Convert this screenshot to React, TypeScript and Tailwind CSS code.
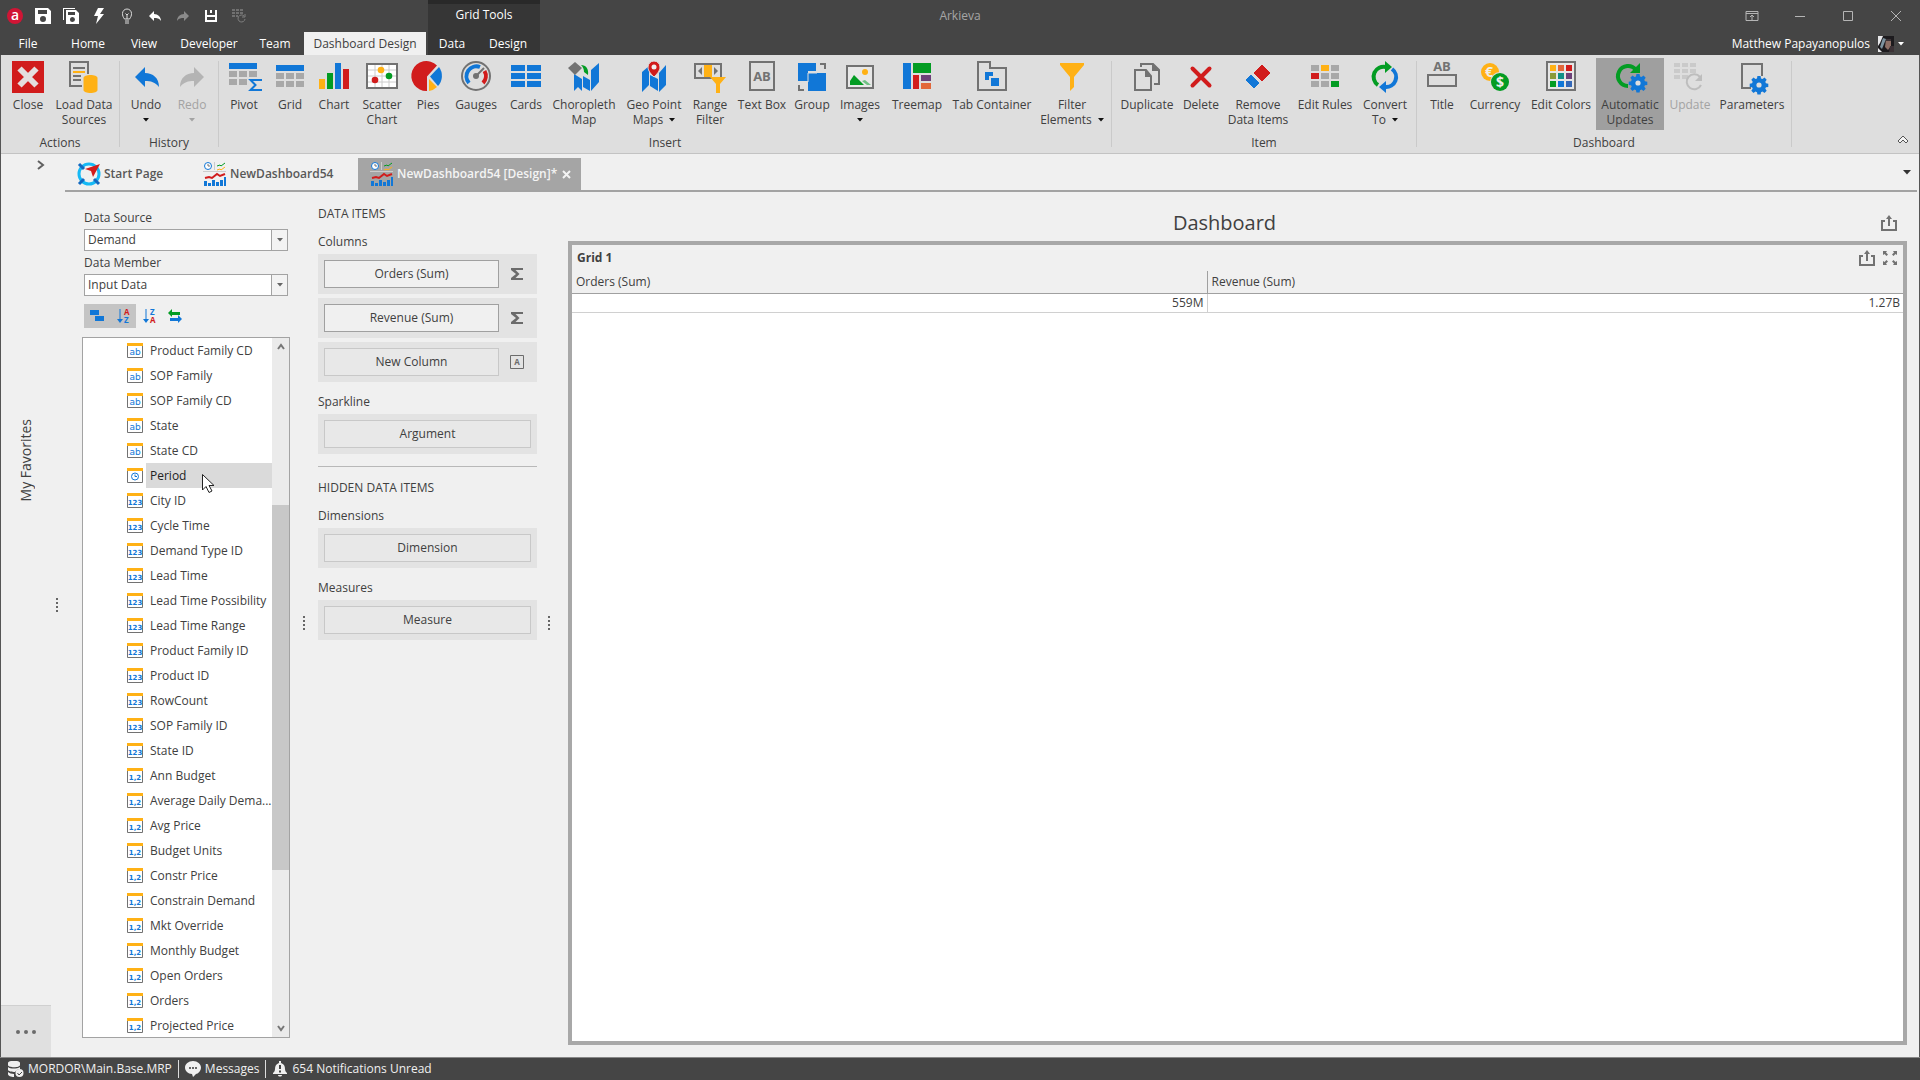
import type { ReactNode } from "react";

const BLUE = "#1177d7";
const RED = "#d11c1c";
const GREEN = "#039c23";
const YELLOW = "#ffb115";
const GRAY = "#727272";
const LIGHT = "#a8a8a8";

function Icon({ children }: { children: ReactNode }) {
  return (
    <svg width="32" height="32" viewBox="0 0 32 32" className="shrink-0 overflow-visible" aria-hidden>
      {children}
    </svg>
  );
}

const GEAR =
  "M-1.6-8h3.2l.4 2.4 1.5.6 2-1.4 2.2 2.2-1.4 2 .6 1.5 2.4.4v3.2l-2.4.4-.6 1.5 1.4 2-2.2 2.2-2-1.4-1.5.6-.4 2.4h-3.2l-.4-2.4-1.5-.6-2 1.4-2.2-2.2 1.4-2-.6-1.5-2.4-.4v-3.2l2.4-.4.6-1.5-1.4-2 2.2-2.2 2 1.4 1.5-.6z";

function Cells({ xs, ys, w, h, fill }: { xs: number[]; ys: number[]; w: number; h: number; fill: string }) {
  return (
    <>
      {ys.map((y) => xs.map((x) => <rect key={`${x}-${y}`} x={x} y={y} width={w} height={h} fill={fill} />))}
    </>
  );
}

function Gear({ x, y }: { x: number; y: number }) {
  return (
    <g transform={`translate(${x} ${y})`}>
      <path d={GEAR} fill={BLUE} transform="translate(0 -1)" />
      <circle r="2.6" fill="#dedede" />
    </g>
  );
}

const icons: Record<string, ReactNode> = {
  close: (
    <>
      <path d="M0 0h32v32H0z" fill={RED} />
      <path d="M7.500 7.500l17 17M24.500 7.500l-17 17" stroke="#e4dede" strokeWidth="6" />
    </>
  ),
  load: (
    <>
      <path d="M20 13V1H2v24h12" fill="none" stroke={GRAY} strokeWidth="2" />
      <path d="M5 7h12M5 15h8M5 19h8" stroke={GRAY} strokeWidth="2" />
      <path d="M5 11h12" stroke={YELLOW} strokeWidth="2" />
      <path d="M15.500 17c0-4 14-4 14 0v12c0 4-14 4-14 0z" fill={YELLOW} />
    </>
  ),
  undo: <path d="M5 16L15 6v6c8 0 14 5 14 14-4-5-8-6-14-6v6z" fill={BLUE} />,
  redo: <path d="M28 16L18 6v6C10 12 4 17 4 26c4-5 8-6 14-6v6z" fill="#b4b4b4" />,
  pivot: (
    <>
      <path d="M1 2h28v6H1z" fill={BLUE} />
      <Cells xs={[1, 11, 21]} ys={[10]} w={8} h={6} fill={LIGHT} />
      <Cells xs={[1, 11]} ys={[18]} w={8} h={6} fill={LIGHT} />
      <path d="M33 20v-1H22.500l5 5-5 5H33v-1" fill="none" stroke={BLUE} strokeWidth="2" />
    </>
  ),
  grid: (
    <>
      <path d="M2 4h28v6H2z" fill={BLUE} />
      <Cells xs={[2, 12, 22]} ys={[12, 20]} w={8} h={6} fill={LIGHT} />
    </>
  ),
  chart: (
    <>
      <path d="M1 18h6v10H1z" fill={YELLOW} />
      <path d="M9 12h6v16H9z" fill={GREEN} />
      <path d="M17 2h6v26h-6z" fill={BLUE} />
      <path d="M25 8h6v20h-6z" fill={RED} />
    </>
  ),
  scatter: (
    <>
      <path d="M1 3h30v24H1z" fill="#fff" stroke={GRAY} strokeWidth="2" />
      <path d="M2 9h28M2 15h28M2 21h28M9 4v22M16 4v22M23 4v22" stroke="#ccc" strokeWidth="1" />
      <circle cx="15" cy="9" r="3.300" fill={YELLOW} />
      <circle cx="23" cy="15" r="3.300" fill={GREEN} />
      <circle cx="9" cy="19" r="3.300" fill={RED} />
    </>
  ),
  pies: (
    <>
      <path d="M15 15.500L25 4.500A15 15 0 1 0 15 30z" fill={RED} />
      <path d="M18 15.500L27 6a15 15 0 0 1-1 19z" fill={BLUE} />
      <path d="M17 18l8 8a15 15 0 0 1-8 4z" fill={YELLOW} />
    </>
  ),
  gauges: (
    <>
      <circle cx="16" cy="15" r="14" fill="none" stroke={GRAY} strokeWidth="2" />
      <path d="M9 22A10 10 0 0 1 20 6" fill="none" stroke={BLUE} strokeWidth="4" />
      <path d="M24.500 10a10 10 0 0 1-1.500 12" fill="none" stroke={RED} strokeWidth="4" />
      <path d="M16 15l8-8" stroke={GRAY} strokeWidth="2" />
      <circle cx="16" cy="15" r="3" fill={GRAY} />
    </>
  ),
  cards: <Cells xs={[1, 17]} ys={[4, 12, 20]} w={14} h={6} fill={BLUE} />,
  choropleth: (
    <>
      <path d="M6 13l8 5v12l-4-4-4 4zM15 15l7 4v11l-7-4zM23 9l8-7v19l-8 9z" fill={BLUE} />
      <path d="M7 1l7 6-7 7-7-7z" fill={GRAY} />
      <path d="M13 4c5 0 8 4 7 10l-4-3c0-3-1-5-3-7z" fill={GREEN} />
    </>
  ),
  geo: (
    <>
      <path d="M4 11l7-6v19l-7 7zM12 14l8 4v12l-8-5zM21 12l7-8v20l-7 7z" fill={BLUE} />
      <path d="M16 0a6 6 0 0 1 6 6c0 4-3 7-6 10-3-3-6-6-6-10a6 6 0 0 1 6-6z" fill={RED} stroke="#dedede" />
      <circle cx="16" cy="6" r="2.500" fill="#f0f0f0" />
    </>
  ),
  range: (
    <>
      <path d="M1 3h26v14H1z" fill="none" stroke={GRAY} strokeWidth="2" />
      <path d="M8 6v8l-4-4zM20 6v8l4-4z" fill={GRAY} />
      <path d="M10 4h8v12h-8z" fill={YELLOW} />
      <path d="M16 16h16l-6 7v9h-4v-9z" fill={YELLOW} />
    </>
  ),
  textbox: (
    <>
      <path d="M4 1h24v28H4z" fill="none" stroke={GRAY} strokeWidth="2" />
      <text x="16" y="20" textAnchor="middle" fontSize="13" fontWeight="700" fill={GRAY}>
        AB
      </text>
    </>
  ),
  group: (
    <>
      <path d="M2 2h18v8h-8v10H2z" fill={BLUE} />
      <path d="M12 12h18v18H12z" fill={BLUE} />
      <path d="M12 21v-9h9" fill="none" stroke="#dedede" />
      <path d="M24 3h5v5M3 24v5h5" fill="none" stroke={GRAY} strokeWidth="2" />
    </>
  ),
  images: (
    <>
      <path d="M3 5h26v22H3z" fill="#e8e8e8" stroke={GRAY} strokeWidth="2" />
      <path d="M6 24v-4l4-6 10 10z" fill={GREEN} />
      <path d="M18 20l3-1 6 5h-4z" fill="#6fc183" />
      <circle cx="21" cy="11" r="3" fill={YELLOW} />
    </>
  ),
  treemap: (
    <>
      <path d="M2 2h8v26H2z" fill={BLUE} />
      <path d="M12 2h18v10H12z" fill={GREEN} />
      <path d="M12 14h6v14h-6z" fill={RED} />
      <path d="M20 14h10v6H20z" fill="#6d4178" />
      <path d="M20 22h10v6H20z" fill="#e2673a" />
    </>
  ),
  tabs: (
    <>
      <path d="M2 1h12v6h16v22H2z" fill="none" stroke={GRAY} strokeWidth="2" />
      <path d="M9 11h8v4h-4v4H9z" fill={BLUE} />
      <path d="M15 17h8v8h-8z" fill={BLUE} />
    </>
  ),
  filter: <path d="M4 2h24v2L18 16v10l-4 4V16L4 4z" fill={YELLOW} />,
  duplicate: (
    <>
      <path d="M10 6V3h12l6 6v14h-5" fill="none" stroke={GRAY} strokeWidth="2" />
      <path d="M4 9h11l5 6v14H4z" fill="none" stroke={GRAY} strokeWidth="2" />
      <path d="M14 8v8h7zM21 2v8h7z" fill={GRAY} />
    </>
  ),
  delete: <path d="M7.500 7.500l17 17M24.500 7.500l-17 17" stroke={RED} strokeWidth="4" strokeLinecap="round" />,
  remove: (
    <>
      <path d="M20 4l8 8-8 8-8-8z" fill={RED} stroke={RED} strokeLinejoin="round" />
      <path d="M9 14l8 8-5 5-8-8z" fill={BLUE} stroke={BLUE} strokeLinejoin="round" />
    </>
  ),
  rules: (
    <>
      <Cells xs={[2, 12, 22]} ys={[4, 12, 20]} w={8} h={6} fill={LIGHT} />
      <path d="M12 4h8v6h-8z" fill={YELLOW} />
      <path d="M2 12h8v6H2z" fill={RED} />
      <path d="M22 20h8v6h-8z" fill={GREEN} />
    </>
  ),
  convert: (
    <>
      <path d="M9 24A10 10 0 0 1 17 6" fill="none" stroke={GREEN} strokeWidth="4" />
      <path d="M16 0l7 6-7 6z" fill={GREEN} />
      <path d="M23 8a10 10 0 0 1-7 18" fill="none" stroke={BLUE} strokeWidth="4" />
      <path d="M17 20v12l-7-6z" fill={BLUE} />
    </>
  ),
  title: (
    <>
      <text x="16" y="10" textAnchor="middle" fontSize="13" fontWeight="700" fill={GRAY}>
        AB
      </text>
      <path d="M2 14h28v11H2z" fill="none" stroke={GRAY} strokeWidth="2" />
    </>
  ),
  currency: (
    <>
      <circle cx="11" cy="11" r="9" fill={YELLOW} />
      <text x="10" y="16" textAnchor="middle" fontSize="14" fontWeight="700" fill="#eee">
        €
      </text>
      <circle cx="21" cy="21" r="10" fill="#dedede" />
      <circle cx="21" cy="21" r="9" fill={GREEN} />
      <text x="21" y="26" textAnchor="middle" fontSize="14" fontWeight="700" fill="#eee">
        $
      </text>
    </>
  ),
  colors: (
    <>
      <path d="M2 1h28v28H2z" fill="#e6e6e6" stroke={GRAY} strokeWidth="2" />
      {[YELLOW, "#e2673a", RED, "#8a9a3a", "#0f8f86", "#6d4178", GREEN, BLUE, "#3468b8"].map((c, i) => (
        <rect key={c} x={5 + (i % 3) * 8} y={4 + Math.floor(i / 3) * 8} width="6" height="6" fill={c} />
      ))}
    </>
  ),
  auto: (
    <>
      <path d="M22 9A10 10 0 1 0 14 25" fill="none" stroke={GREEN} strokeWidth="4" />
      <path d="M26 2v10H16z" fill={GREEN} />
      <Gear x={24} y={22} />
    </>
  ),
  update: (
    <>
      <Cells xs={[0, 8, 16]} ys={[2, 8]} w={6} h={4} fill="#cacaca" />
      <Cells xs={[0, 8]} ys={[14]} w={6} h={4} fill="#cacaca" />
      <path d="M26 16a7.500 7.500 0 1 0 1 8" fill="none" stroke="#bdbdbd" strokeWidth="2" />
      <path d="M28 13v7h-7z" fill="#bdbdbd" />
    </>
  ),
  params: (
    <>
      <path d="M26 15V3H6v24h9" fill="none" stroke={GRAY} strokeWidth="2" />
      <Gear x={23} y={24} />
    </>
  ),
};

type RibbonItem = {
  icon: string;
  lines: string[];
  width: string;
  menu?: boolean;
  disabled?: boolean;
  active?: boolean;
};

const ribbonGroups: { name: string; items: RibbonItem[] }[] = [
  {
    name: "Actions",
    items: [
      { icon: "close", lines: ["Close"], width: "w-12" },
      { icon: "load", lines: ["Load Data", "Sources"], width: "w-16" },
    ],
  },
  {
    name: "History",
    items: [
      { icon: "undo", lines: ["Undo"], width: "w-[46px]", menu: true },
      { icon: "redo", lines: ["Redo"], width: "w-[46px]", menu: true, disabled: true },
    ],
  },
  {
    name: "Insert",
    items: [
      { icon: "pivot", lines: ["Pivot"], width: "w-11" },
      { icon: "grid", lines: ["Grid"], width: "w-12" },
      { icon: "chart", lines: ["Chart"], width: "w-10" },
      { icon: "scatter", lines: ["Scatter", "Chart"], width: "w-14" },
      { icon: "pies", lines: ["Pies"], width: "w-9" },
      { icon: "gauges", lines: ["Gauges"], width: "w-15" },
      { icon: "cards", lines: ["Cards"], width: "w-10" },
      { icon: "choropleth", lines: ["Choropleth", "Map"], width: "w-19" },
      { icon: "geo", lines: ["Geo Point", "Maps"], width: "w-16", menu: true },
      { icon: "range", lines: ["Range", "Filter"], width: "w-12" },
      { icon: "textbox", lines: ["Text Box"], width: "w-14" },
      { icon: "group", lines: ["Group"], width: "w-11" },
      { icon: "images", lines: ["Images"], width: "w-13", menu: true },
      { icon: "treemap", lines: ["Treemap"], width: "w-[62px]" },
      { icon: "tabs", lines: ["Tab Container"], width: "w-22" },
      { icon: "filter", lines: ["Filter", "Elements"], width: "w-18", menu: true },
    ],
  },
  {
    name: "Item",
    items: [
      { icon: "duplicate", lines: ["Duplicate"], width: "w-16" },
      { icon: "delete", lines: ["Delete"], width: "w-11" },
      { icon: "remove", lines: ["Remove", "Data Items"], width: "w-[70px]" },
      { icon: "rules", lines: ["Edit Rules"], width: "w-16" },
      { icon: "convert", lines: ["Convert", "To"], width: "w-14", menu: true },
    ],
  },
  {
    name: "Dashboard",
    items: [
      { icon: "title", lines: ["Title"], width: "w-11" },
      { icon: "currency", lines: ["Currency"], width: "w-[62px]" },
      { icon: "colors", lines: ["Edit Colors"], width: "w-[70px]" },
      { icon: "auto", lines: ["Automatic", "Updates"], width: "w-17", active: true },
      { icon: "update", lines: ["Update"], width: "w-13", disabled: true },
      { icon: "params", lines: ["Parameters"], width: "w-18" },
    ],
  },
];

function Caret({ className = "" }: { className?: string }) {
  return (
    <svg width="6" height="4" viewBox="0 0 6 4" className={`inline-block shrink-0 ${className}`} aria-hidden>
      <path d="M0 0h6L3 3.500z" fill="currentColor" />
    </svg>
  );
}

function RibbonButton({ item }: { item: RibbonItem }) {
  const [first, second] = item.lines;
  return (
    <button
      type="button"
      disabled={item.disabled}
      className={`flex h-18 flex-col items-center pt-[3px] leading-[15px] whitespace-nowrap ${item.width} ${
        item.active ? "bg-[#9f9f9f]" : ""
      } ${item.disabled ? "text-[#a3a3a3]" : "text-[#404040]"}`}
    >
      <Icon>{icons[item.icon]}</Icon>
      <span className="mt-1">{first}</span>
      <span className="flex h-[15px] items-center gap-1.5">
        {second}
        {item.menu && <Caret className={item.disabled ? "" : "text-[#111]"} />}
      </span>
    </button>
  );
}

function Ribbon() {
  return (
    <div className="flex h-[99px] border-b border-[#c3c3c3] bg-[#dedede]">
      {ribbonGroups.map((group) => (
        <section key={group.name} className="flex items-start">
          <div className="px-[3px] pt-[3px] text-center">
            <div className="flex">
              {group.items.map((item) => (
                <RibbonButton key={item.icon} item={item} />
              ))}
            </div>
            <h2 className="mt-1 leading-[18px] text-[#404040]">{group.name}</h2>
          </div>
          <div className="mt-1.5 h-[86px] w-px bg-[#cacaca]" />
        </section>
      ))}
      <button type="button" aria-label="Collapse the ribbon" className="mt-auto mr-2.5 mb-1.5 ml-auto">
        <svg width="12" height="12" viewBox="0 0 12 12" fill="none" stroke="#555">
          <path d="M1 6l5-5 5 5-2 2-3-3-3 3z" fill="#f5f5f5" />
        </svg>
      </button>
    </div>
  );
}

const quickIcons: [string, ReactNode][] = [
  ["Save", <path key="p" fillRule="evenodd" fill="#fff" d="M0 0h13l3 3v13H0zM3 2v4h9V2zM8 8a3 3 0 1 0 0 6 3 3 0 0 0 0-6z" />],
  [
    "Save All",
    <g key="p" fill="#fff">
      <path d="M0 0h12v1H1v11H0z" />
      <path fillRule="evenodd" d="M3 2h10l3 3v11H3zM5 4v3h7V4zM9.500 9a2.500 2.500 0 1 0 0 5 2.500 2.500 0 0 0 0-5z" />
    </g>,
  ],
  ["Run", <path key="p" fill="#fff" d="M7 0h6l-4 6h4L5 16l2-8H3z" />],
  [
    "Hint",
    <g key="p" fill="none" stroke="#ddd">
      <path d="M5.500 11C4 9 3.500 7.500 3.500 5.500a4.500 4.500 0 0 1 9 0c0 2-.5 3.500-2 5.500zM6 13h4M6 15h4M8 11V6M6.500 5.500L8 7l1.500-1.500" />
    </g>,
  ],
  ["Undo", <path key="p" fill="#fff" d="M2 8l5-5v3c4 0 7 3 7 7-2-3-4-3-7-3v3z" />],
  ["Redo", <path key="p" fill="#8b8b8b" d="M14 8L9 3v3c-4 0-7 3-7 7 2-3 4-3 7-3v3z" />],
  ["Save Dashboard", <path key="p" fillRule="evenodd" fill="#fff" d="M2 2h12v12H2zM4 2v5h8V2H9v3H7V2zM4 9v3h8V9z" />],
  [
    "Update",
    <g key="p" fill="#707070">
      <path d="M1 1h3v2H1zM5 1h3v2H5zM9 1h3v2H9zM1 4h3v2H1zM5 4h3v2H5zM9 4h3v2H9zM1 7h3v2H1zM5 7h2v2H5z" />
      <path d="M13 8a3.500 3.500 0 1 0 1 3M14 6v3h-3" fill="none" stroke="#808080" />
    </g>,
  ],
];

const tabs = [
  { name: "File", width: "w-15 pr-1" },
  { name: "Home", width: "w-14" },
  { name: "View", width: "w-14" },
  { name: "Developer", width: "w-[74px]" },
  { name: "Team", width: "w-[58px]" },
];

function TitleBar() {
  return (
    <header className="grid h-[55px] grid-cols-[1fr_auto_1fr] bg-[#454545] text-white">
      <div className="flex">
        <div className="mr-0.5">
          <div className="flex h-8 items-center gap-3 pl-[7px]">
            <span className="flex size-4 items-center justify-center rounded-full bg-[#d01535] pb-0.5 text-sm leading-none font-semibold">
              a
            </span>
            {quickIcons.map(([name, icon]) => (
              <button key={name} type="button" aria-label={name}>
                <svg width="16" height="16" viewBox="0 0 16 16">
                  {icon}
                </svg>
              </button>
            ))}
          </div>
          <nav className="flex h-[23px]">
            {tabs.map((tab) => (
              <button key={tab.name} type="button" className={tab.width}>
                {tab.name}
              </button>
            ))}
            <button type="button" className="w-[122px] bg-[#f0f0f0] text-[#404040]">
              Dashboard Design
            </button>
          </nav>
        </div>
        <div className="w-28 border-t-4 border-[#292929] bg-[#363636]">
          <div className="flex h-7 justify-center pt-0.5 leading-[18px]">Grid Tools</div>
          <nav className="flex h-[23px]">
            <button type="button" className="w-12">
              Data
            </button>
            <button type="button" className="w-16">
              Design
            </button>
          </nav>
        </div>
      </div>
      <h1 className="leading-8 text-[#a5a5a5]">Arkieva</h1>
      <div className="flex flex-col items-end">
        <div className="flex h-8 text-[#b5b5b5]">
          {[
            ["Ribbon options", "M2 3.500h12v9H2zM2 5.500h12M8 12V7M6 9l2-2 2 2"],
            ["Minimize", "M3 8.500h10"],
            ["Maximize", "M3.500 3.500h9v9h-9z"],
            ["Close window", "M3 3l10 10M13 3L3 13"],
          ].map(([name, d]) => (
            <button key={name} type="button" aria-label={name} className="flex w-12 items-center justify-center">
              <svg width="16" height="16" viewBox="0 0 16 16" fill="none" stroke="currentColor">
                <path d={d} />
              </svg>
            </button>
          ))}
        </div>
        <button type="button" className="flex h-[23px] items-center pr-4">
          Matthew Papayanopulos
          <svg width="16" height="16" viewBox="0 0 16 16" className="mr-1 ml-2">
            <path d="M0 0h16v16H0z" fill="#1d1b1e" />
            <path d="M0 0h5L2 7l-2 3zM0 12l4 4H0z" fill="#e8e8ea" />
            <path d="M5 2L2 11l2 2 4-10z" fill="#7d93a0" />
            <path d="M8 3h5v7l-3 4-3-3z" fill="#8d6f66" />
            <path d="M8 3h5v2H8zM12 10h4v6h-5z" fill="#3c3236" />
          </svg>
          <Caret />
        </button>
      </div>
    </header>
  );
}

function CompassIcon() {
  return (
    <svg width="24" height="24" viewBox="0 0 24 24" aria-hidden>
      <circle cx="12" cy="12" r="10" fill="none" stroke="#16b9f5" strokeWidth="3" />
      <path d="M2 2l5 5M2 22l5-5M22 22l-5-5" stroke="#1368c0" strokeWidth="3" />
      <path d="M23 2l-7 13-2-6-6-2z" fill={RED} />
    </svg>
  );
}

function DashboardIcon() {
  return (
    <svg width="24" height="24" viewBox="0 0 24 24" aria-hidden>
      <circle cx="5" cy="4" r="3.500" fill="#fff" stroke={BLUE} />
      <path d="M5 2v2h2" fill="none" stroke={GRAY} />
      <path d="M11.500 0v8M0 9.500h23" stroke="#ccc" />
      <path d="M14 4l3-1 1 1 4-3" fill="none" stroke={GREEN} />
      <path d="M14 8l3-1 1 1 4-3" fill="none" stroke={YELLOW} />
      <path d="M2 16l4-1 3 1 5-4 3 2 5-2" fill="none" stroke={RED} strokeWidth="2" />
      <path d="M1 19h3v5H1zM5 21h3v3H5zM9 18h3v6H9zM13 20h3v4h-3zM17 18h3v6h-3zM21 15h2v9h-2z" fill={BLUE} />
    </svg>
  );
}

function DocumentTabs() {
  return (
    <div className="mr-0.5 ml-16 flex h-[38px] border-b-2 border-[#a3a3a3] pt-1 font-semibold text-[#585858]">
      <button type="button" className="flex w-[126px] items-center gap-[3px] pl-3">
        <CompassIcon />
        Start Page
      </button>
      <button type="button" className="flex w-[167px] items-center gap-[3px] pl-3">
        <DashboardIcon />
        NewDashboard54
      </button>
      <div className="flex w-[223px] items-center bg-[#a5a5a5] pl-3 text-[#f4f4f4]">
        <button type="button" className="flex items-center gap-[3px] whitespace-nowrap">
          <DashboardIcon />
          NewDashboard54 [Design]*
        </button>
        <button type="button" aria-label="Close tab" className="mr-2.5 ml-auto">
          <svg width="9" height="9" viewBox="0 0 9 9" stroke="currentColor" strokeWidth="2">
            <path d="M1 1l7 7M8 1L1 8" />
          </svg>
        </button>
      </div>
      <button type="button" aria-label="Open documents" className="mr-1.5 ml-auto pb-1 text-[#333]">
        <svg width="8" height="5" viewBox="0 0 8 5">
          <path d="M0 0h8L4 4.500z" fill="currentColor" />
        </svg>
      </button>
    </div>
  );
}

function Grip({ className = "" }: { className?: string }) {
  return (
    <div className={`flex flex-col gap-0.5 ${className}`}>
      <i className="size-0.5 bg-[#666]" />
      <i className="size-0.5 bg-[#666]" />
      <i className="size-0.5 bg-[#666]" />
      <i className="size-0.5 bg-[#666]" />
    </div>
  );
}

type FieldKind = "ab" | "date" | "123" | "1,2";

const fields: [FieldKind, string][] = [
  ["ab", "Product Family CD"],
  ["ab", "SOP Family"],
  ["ab", "SOP Family CD"],
  ["ab", "State"],
  ["ab", "State CD"],
  ["date", "Period"],
  ["123", "City ID"],
  ["123", "Cycle Time"],
  ["123", "Demand Type ID"],
  ["123", "Lead Time"],
  ["123", "Lead Time Possibility"],
  ["123", "Lead Time Range"],
  ["123", "Product Family ID"],
  ["123", "Product ID"],
  ["123", "RowCount"],
  ["123", "SOP Family ID"],
  ["123", "State ID"],
  ["1,2", "Ann Budget"],
  ["1,2", "Average Daily Dema..."],
  ["1,2", "Avg Price"],
  ["1,2", "Budget Units"],
  ["1,2", "Constr Price"],
  ["1,2", "Constrain Demand"],
  ["1,2", "Mkt Override"],
  ["1,2", "Monthly Budget"],
  ["1,2", "Open Orders"],
  ["1,2", "Orders"],
  ["1,2", "Projected Price"],
];

function FieldIcon({ kind }: { kind: FieldKind }) {
  return (
    <svg width="16" height="15" viewBox="0 0 16 15" className="shrink-0" aria-hidden>
      <path d="M.5 2.500v12h15v-12" fill="#fff" stroke={GRAY} />
      <path d="M0 0h16v3H0z" fill={YELLOW} />
      {kind === "date" ? (
        <g fill="none" stroke={BLUE}>
          <circle cx="8" cy="8.500" r="3.500" />
          <path d="M8 6.500v2h2" />
        </g>
      ) : (
        <text
          x="8"
          y="12"
          textAnchor="middle"
          fontFamily="DejaVu Sans, sans-serif"
          fontSize={kind === "ab" ? 9 : 7}
          fontWeight={kind === "ab" ? 400 : 700}
          fill={BLUE}
        >
          {kind}
        </text>
      )}
    </svg>
  );
}

function Picker({ id, label, value }: { id: string; label: string; value: string }) {
  return (
    <div>
      <label htmlFor={id} className="block h-[23px] leading-6">
        {label}
      </label>
      <div className="relative">
        <select
          id={id}
          className="block h-[22px] w-full appearance-none rounded-none border border-[#a3a3a3] bg-white pl-[3px] leading-5"
        >
          <option>{value}</option>
        </select>
        <span className="pointer-events-none absolute inset-y-0 right-0 flex w-[17px] items-center justify-center border border-[#a3a3a3] bg-[#f3f3f3] text-[#666]">
          <Caret />
        </span>
      </div>
    </div>
  );
}

function SortIcon({ top, bottom }: { top: string; bottom: string }) {
  return (
    <svg width="16" height="16" viewBox="0 0 16 16" fontSize="8" fontWeight="700" className="overflow-visible">
      <path d="M5 1v12" stroke={BLUE} />
      <path d="M2 11h6l-3 4z" fill={BLUE} />
      <text x="9" y="7" fill={top === "A" ? RED : BLUE}>
        {top}
      </text>
      <text x="9" y="15" fill={bottom === "A" ? RED : BLUE}>
        {bottom}
      </text>
    </svg>
  );
}

function FieldPanel() {
  return (
    <aside className="flex w-[208px] shrink-0 flex-col pt-3.5 pb-[19px]">
      <div className="flex flex-col px-0.5">
        <Picker id="data-source" label="Data Source" value="Demand" />
        <Picker id="data-member" label="Data Member" value="Input Data" />
        <div className="mt-2 mb-[9px] flex">
          <button type="button" aria-label="Group by type" className="flex h-6 w-[26px] items-center justify-center bg-[#c4c4c4]">
            <svg width="16" height="16" viewBox="0 0 16 16" fill={BLUE}>
              <path d="M1 2h9v5H1zM6 8h9v5H6z" />
            </svg>
          </button>
          <button type="button" aria-label="Sort ascending" className="flex h-6 w-[26px] items-center justify-center bg-[#c4c4c4]">
            <SortIcon top="A" bottom="Z" />
          </button>
          <button type="button" aria-label="Sort descending" className="flex h-6 w-[26px] items-center justify-center">
            <SortIcon top="Z" bottom="A" />
          </button>
          <button type="button" aria-label="Refresh fields" className="flex h-6 w-[26px] items-center justify-center">
            <svg width="16" height="16" viewBox="0 0 16 16">
              <path d="M1 5l4-4v3h8v3H5v2z" fill={GREEN} />
              <path d="M15 11l-4-4v3H3v3h8v2z" fill={BLUE} />
            </svg>
          </button>
        </div>
      </div>
      <div className="flex min-h-0 flex-1 border border-[#a3a3a3] bg-white">
        <ul className="min-w-0 flex-1 overflow-hidden">
          {fields.map(([kind, name]) => (
            <li key={name} className="relative flex h-[25px] items-center gap-[3px] pl-11">
              <FieldIcon kind={kind} />
              <button
                type="button"
                className={`h-full min-w-0 flex-1 pl-1 text-left whitespace-nowrap ${
                  kind === "date" ? "bg-[#dadada] text-[#222]" : ""
                }`}
              >
                {name}
              </button>
              {kind === "date" && (
                <svg width="13" height="20" viewBox="0 0 13 20" className="absolute top-[11px] left-[119px] z-10">
                  <path d="M.5.500v15.500l3.500-3.500 3 6 3-1.500-3-5.500h5z" fill="#fff" stroke="#222" />
                </svg>
              )}
            </li>
          ))}
        </ul>
        <div className="flex w-[17px] flex-col items-center bg-[#ebebeb] text-[#777]">
          <svg width="8" height="17" viewBox="0 0 8 17" fill="none" stroke="currentColor" strokeWidth="2">
            <path d="M1 11l3-4 3 4" />
          </svg>
          <div className="flex w-full flex-1 flex-col">
            <div className="h-[22.500%]" />
            <div className="h-[55%] bg-[#c8c8c8]" />
          </div>
          <svg width="8" height="17" viewBox="0 0 8 17" fill="none" stroke="currentColor" strokeWidth="2">
            <path d="M1 6l3 4 3-4" />
          </svg>
        </div>
      </div>
    </aside>
  );
}

function Slot({ label, side, filled }: { label: string; side?: ReactNode; filled?: boolean }) {
  return (
    <div className="flex h-10 bg-[#e3e3e3] p-1.5">
      <button
        type="button"
        className={`flex-1 border ${filled ? "border-[#a0a0a0] bg-[#f0f0f0]" : "border-[#c8c8c8] bg-[#e8e8e8]"}`}
      >
        {label}
      </button>
      {side && <div className="flex w-8 items-center justify-center pl-1">{side}</div>}
    </div>
  );
}

const sigma = (
  <svg width="12" height="12" viewBox="0 0 12 12" aria-label="Sum">
    <path d="M0 0h12v2H4.500l4 4-4 4H12v2H0v-2l5-4-5-4z" fill="#6b6b6b" />
  </svg>
);

const textType = (
  <svg width="14" height="14" viewBox="0 0 14 14" aria-label="Text column">
    <path d="M.5.500h13v13H.5z" fill="none" stroke="#6b6b6b" />
    <text x="7" y="10" textAnchor="middle" fontSize="8" fontWeight="700" fill="#6b6b6b">
      A
    </text>
  </svg>
);

function DataItems() {
  return (
    <aside className="w-[219px] shrink-0 pt-[13px]">
      <h2 className="leading-[18px]">DATA ITEMS</h2>
      <h3 className="mt-2.5 mb-[3px] leading-[18px]">Columns</h3>
      <div className="flex flex-col gap-1">
        <Slot label="Orders (Sum)" side={sigma} filled />
        <Slot label="Revenue (Sum)" side={sigma} filled />
        <Slot label="New Column" side={textType} />
      </div>
      <h3 className="mt-[11px] mb-[3px] leading-[18px]">Sparkline</h3>
      <Slot label="Argument" />
      <hr className="my-3 border-[#b8b8b8]" />
      <h2 className="leading-[18px]">HIDDEN DATA ITEMS</h2>
      <h3 className="mt-2.5 mb-[3px] leading-[18px]">Dimensions</h3>
      <Slot label="Dimension" />
      <h3 className="mt-[11px] mb-[3px] leading-[18px]">Measures</h3>
      <Slot label="Measure" />
    </aside>
  );
}

function ShareIcon() {
  return (
    <svg width="16" height="16" viewBox="0 0 16 16" fill="none" stroke={GRAY} strokeWidth="2">
      <path d="M4 6H1v9h14V6h-3M8 11V2" />
      <path d="M5 4l3-4 3 4z" fill={GRAY} stroke="none" />
    </svg>
  );
}

function DashboardView() {
  return (
    <main className="mr-3 ml-[18px] flex flex-1 flex-col pb-3">
      <div className="flex h-[49px] items-center pt-3">
        <h2 className="flex-1 text-center text-xl">Dashboard</h2>
        <button type="button" aria-label="Export dashboard" className="flex w-[26px]">
          <ShareIcon />
        </button>
      </div>
      <section className="flex-1 border-4 border-[#a8a8a8] bg-white">
        <div className="flex h-[26px] items-center bg-[#f0f0f0] pr-1.5 pl-[5px]">
          <h3 className="flex-1 font-bold">Grid 1</h3>
          <button type="button" aria-label="Export grid" className="mr-2">
            <ShareIcon />
          </button>
          <button type="button" aria-label="Maximize grid">
            <svg width="14" height="14" viewBox="0 0 14 14" fill={GRAY}>
              <path d="M0 0h4L3 1.500 5 3.500 3.500 5 1.500 3 0 4zM14 0h-4l1 1.500L9 3.500 10.500 5l2-2L14 4zM0 14h4l-1-1.500L5 10.500 3.500 9l-2 2L0 10zM14 14h-4l1-1.500L9 10.500 10.500 9l2 2L14 10z" />
            </svg>
          </button>
        </div>
        <table className="w-full table-fixed border-collapse">
          <thead>
            <tr className="h-[22px] border-b border-[#a0a0a0] bg-[#f0f0f0] text-left">
              <th scope="col" className="w-[635px] border-r border-[#a0a0a0] pl-1 font-normal">
                Orders (Sum)
              </th>
              <th scope="col" className="pl-1 font-normal">
                Revenue (Sum)
              </th>
            </tr>
          </thead>
          <tbody>
            <tr className="h-[19px] border-b border-[#d0d0d0] text-right leading-[18px]">
              <td className="border-r border-[#d0d0d0] pr-[3px]">559M</td>
              <td className="pr-[3px]">1.27B</td>
            </tr>
          </tbody>
        </table>
      </section>
    </main>
  );
}

function Favorites() {
  return (
    <nav className="flex w-[50px] shrink-0 flex-col">
      <button type="button" aria-label="Expand favorites" className="-mt-8 ml-9 w-2.5">
        <svg width="8" height="11" viewBox="0 0 8 11" fill="none" stroke="#606060" strokeWidth="2">
          <path d="M1 1l5 4-5 4" />
        </svg>
      </button>
      <div className="flex flex-1 items-center justify-center">
        <button type="button" className="mb-64 rotate-180 text-sm leading-5 [writing-mode:vertical-rl]">
          My Favorites
        </button>
      </div>
      <button
        type="button"
        aria-label="More"
        className="flex h-[52px] items-center justify-center gap-1 border-t border-[#d0d0d0] bg-[#e0e0e0]"
      >
        <i className="size-1 rounded-full bg-[#6b6b6b]" />
        <i className="size-1 rounded-full bg-[#6b6b6b]" />
        <i className="size-1 rounded-full bg-[#6b6b6b]" />
      </button>
    </nav>
  );
}

function StatusBar() {
  return (
    <footer className="flex h-[23px] items-center border-t border-[#888] bg-[#454545] pl-2 text-[#f0f0f0]">
      <button type="button" className="flex items-center gap-1">
        <svg width="16" height="16" viewBox="0 0 16 16" fill="#f0f0f0">
          <path d="M0 2c0-3 12-3 12 0v2c0 3-12 3-12 0zM0 6c2 2 9 2 12 0v2c-3 0-4 2-5 3-3 0-7-1-7-2zM0 11c1 1 4 2 6 2v3c-3 0-6-1-6-3z" />
          <circle cx="11.500" cy="12" r="4" />
          <path d="M9.500 12l1.500 2 3-3" fill="none" stroke="#454545" />
        </svg>
        MORDOR\Main.Base.MRP
      </button>
      <i className="mx-1.5 h-[18px] w-px bg-[#ddd]" />
      <button type="button" className="flex items-center gap-1">
        <svg width="16" height="16" viewBox="0 0 16 16">
          <path d="M8 0c4.500 0 8 3 8 6.500S13 13 11 13l-3 3-1-3C3 13 0 10 0 6.500S3.500 0 8 0z" fill="#f0f0f0" />
          <path d="M4 6h2v2H4zM7 6h2v2H7zM10 6h2v2h-2z" fill="#666" />
        </svg>
        Messages
      </button>
      <i className="mx-1.5 h-[18px] w-px bg-[#ddd]" />
      <button type="button" className="flex items-center gap-1">
        <svg width="16" height="16" viewBox="0 0 16 16">
          <path d="M7 0h2v2c3 1 4 3 4 6 0 2 1 3 2 4v1H1v-1c1-1 2-2 2-4 0-3 1-5 4-6zM6 14h4c0 2-4 2-4 0z" fill="#f0f0f0" />
          <path d="M7 4h2v4H7zM7 9.500h2v2H7z" fill="#454545" />
        </svg>
        654 Notifications Unread
      </button>
    </footer>
  );
}

export default function App() {
  return (
    <div className="flex h-screen min-h-[700px] flex-col overflow-hidden bg-[#f0f0f0] font-['Open_Sans','Noto_Sans',sans-serif] text-xs text-[#404040]">
      <TitleBar />
      <div className="flex min-h-0 flex-1 flex-col border-x border-[#555]">
        <Ribbon />
        <DocumentTabs />
        <div className="flex min-h-0 flex-1">
          <Favorites />
          <Grip className="mr-6 ml-[5px] justify-center pb-10" />
          <FieldPanel />
          <Grip className="mx-[13px] justify-center pb-1" />
          <DataItems />
          <Grip className="ml-[11px] justify-center pb-1" />
          <DashboardView />
        </div>
      </div>
      <StatusBar />
    </div>
  );
}
